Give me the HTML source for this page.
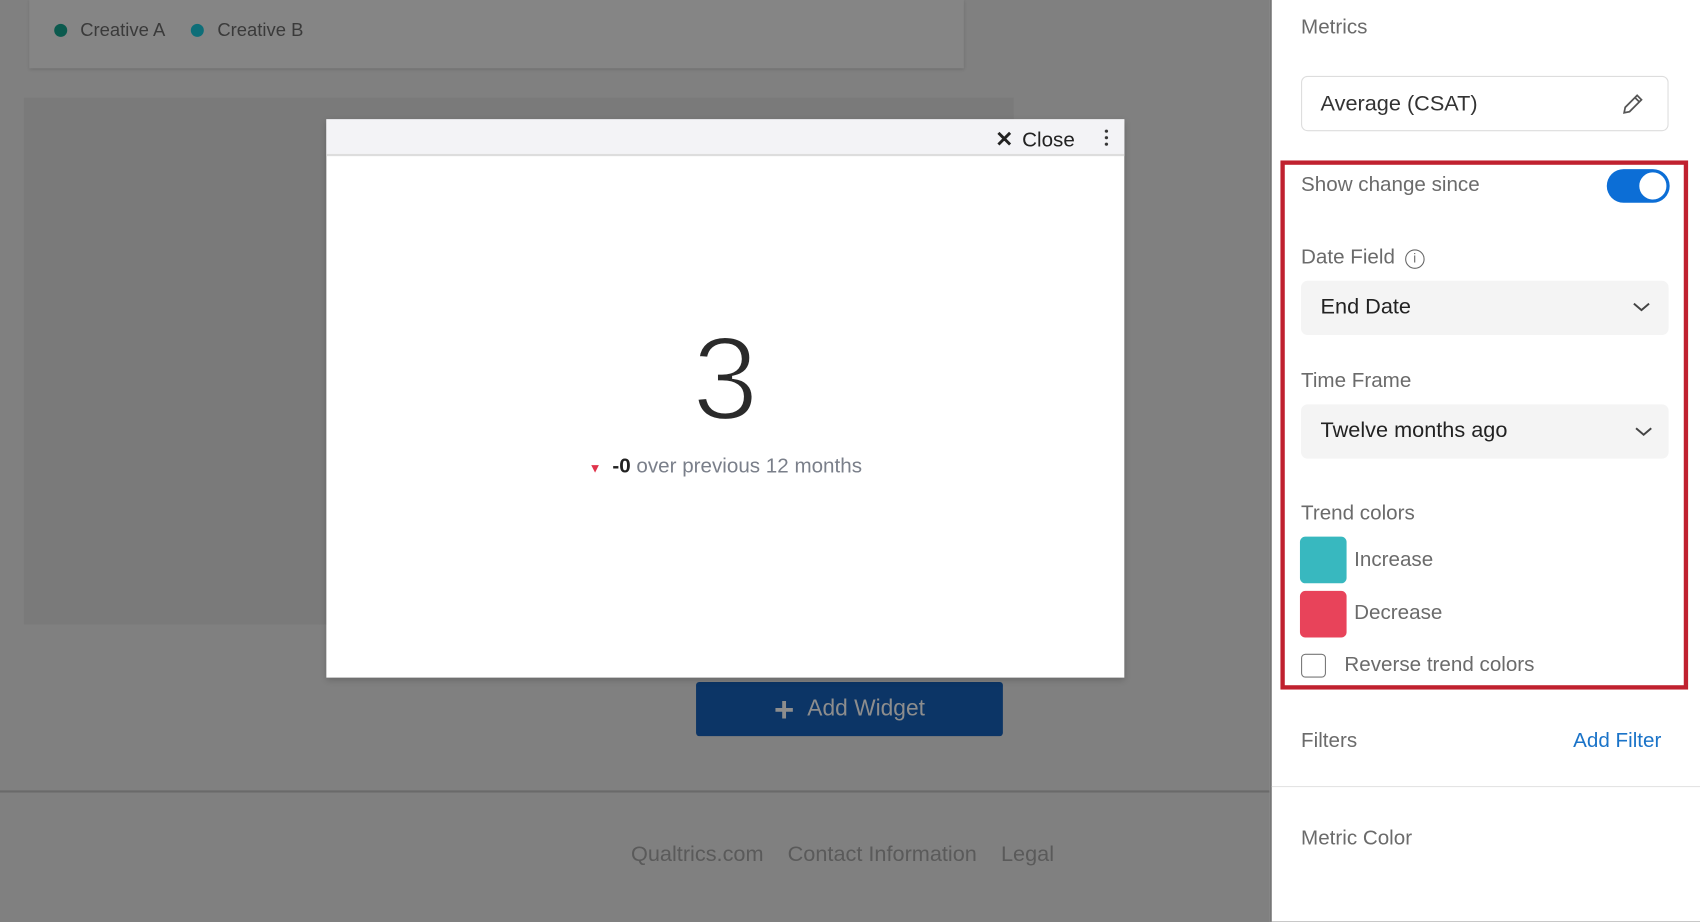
<!DOCTYPE html>
<html><head><style>
*{box-sizing:border-box;margin:0;padding:0}
body{width:1700px;height:850px;overflow:hidden;background:#808080;font-family:"Liberation Sans",sans-serif;position:relative}
#w{position:absolute;left:0;top:0;width:1568px;height:784px;transform:scale(1.0842);transform-origin:0 0}
.abs{position:absolute}
.lbl{color:#6b6b6b;font-size:19px}
</style></head><body><div id="w">
<div class="abs" style="left:27px;top:0;width:862px;height:63px;background:#858585;box-shadow:0 1px 3px rgba(0,0,0,.15)"></div>
<div class="abs" style="left:50px;top:18px;font-size:17px;color:#3a3a3a;display:flex;align-items:center">
<span style="width:12px;height:12px;border-radius:50%;background:#0b5a4e;display:inline-block;margin-right:12px"></span>Creative A
<span style="width:12px;height:12px;border-radius:50%;background:#0e6e78;display:inline-block;margin:0 12px 0 24px"></span>Creative B</div>
<div class="abs" style="left:22px;top:90px;width:913px;height:486px;background:#7a7a7a"></div>
<div class="abs" style="left:642px;top:629px;width:283px;height:50px;background:#0c3566;border-radius:3px;color:#8d8d8d;font-size:21px;display:flex;align-items:center;justify-content:center"><span style="font-size:32px;font-weight:bold;margin-right:12px;line-height:1">+</span>Add Widget</div>
<div class="abs" style="left:0;top:729px;width:1171px;height:2px;background:#6a6a6a"></div>
<div class="abs" style="left:582px;top:777px;font-size:20px;color:#5a5a5a">Qualtrics.com&nbsp;&nbsp;&nbsp;&nbsp;Contact Information&nbsp;&nbsp;&nbsp;&nbsp;Legal</div>
<div class="abs" style="left:301px;top:110px;width:736px;height:515px;background:#fff;box-shadow:0 2px 6px rgba(0,0,0,.2)">
<div style="height:34px;background:#f3f3f6;border-bottom:2px solid #ddd;position:relative">
<div class="abs" style="left:617px;top:6px;font-size:19px;color:#222"><b style="font-size:20px;margin-right:8px">✕</b>Close</div>
<div class="abs" style="left:718px;top:8px;width:3px;height:18px;background:radial-gradient(circle,#333 1.4px,transparent 1.6px) 0 0/3px 6px"></div>
</div>
<div class="abs" style="left:0;top:185px;width:736px;text-align:center;font-size:110px;color:#2a2a2a;line-height:1;-webkit-text-stroke:3px #fff;paint-order:normal">3</div>
<div class="abs" style="left:0;top:310px;width:736px;text-align:center;font-size:19px;color:#7a7f8a"><span style="color:#e0334b;font-size:12px;margin-right:10px">▼</span><b style="color:#222">-0</b> over previous 12 months</div>
</div>
<div class="abs" style="left:1171px;top:0;width:529px;height:850px;background:#fff;border-left:2px solid #777"></div>
<div class="abs lbl" style="left:1200px;top:15px">Metrics</div>
<div class="abs" style="left:1200px;top:70px;width:339px;height:51px;border:1px solid #ddd;border-radius:6px;font-size:20px;color:#333;padding:14px 0 0 17px">Average (CSAT)
<svg class="abs" style="right:20px;top:13px" width="24" height="24" viewBox="0 0 24 24" fill="none" stroke="#555" stroke-width="1.6"><path d="M4 20l1-5L16 4l4 4L9 19z M14 6l4 4"/></svg></div>
<div class="abs" style="left:1181px;top:148px;width:376px;height:488px;border:4px solid #c0212f"></div>
<div class="abs lbl" style="left:1200px;top:160px">Show change since</div>
<div class="abs" style="left:1482px;top:156px;width:58px;height:31px;border-radius:16px;background:#0c6ed6"><div class="abs" style="right:1px;top:1px;width:29px;height:29px;border-radius:50%;background:#fff;border:2px solid #0c6ed6"></div></div>
<div class="abs lbl" style="left:1200px;top:227px">Date Field <span style="display:inline-block;width:18px;height:18px;border:1.5px solid #666;border-radius:50%;font-size:12px;text-align:center;line-height:15px;vertical-align:1px;margin-left:4px">i</span></div>
<div class="abs" style="left:1200px;top:259px;width:339px;height:50px;background:#f4f4f4;border-radius:6px;font-size:20px;color:#222;padding:13px 0 0 18px">End Date</div>
<div class="abs lbl" style="left:1200px;top:341px">Time Frame</div>
<div class="abs" style="left:1200px;top:373px;width:339px;height:50px;background:#f4f4f4;border-radius:6px;font-size:20px;color:#222;padding:13px 0 0 18px">Twelve months ago</div>
<svg class="abs" style="left:1505px;top:277px" width="18" height="12" viewBox="0 0 18 12" fill="none" stroke="#444" stroke-width="1.8"><path d="M2 3l7 6 7-6"/></svg>
<svg class="abs" style="left:1507px;top:392px" width="18" height="12" viewBox="0 0 18 12" fill="none" stroke="#444" stroke-width="1.8"><path d="M2 3l7 6 7-6"/></svg>
<div class="abs lbl" style="left:1200px;top:463px">Trend colors</div>
<div class="abs" style="left:1199px;top:495px;width:43px;height:43px;background:#38b8bf;border-radius:5px"></div>
<div class="abs lbl" style="left:1249px;top:506px">Increase</div>
<div class="abs" style="left:1199px;top:545px;width:43px;height:43px;background:#e8435a;border-radius:5px"></div>
<div class="abs lbl" style="left:1249px;top:555px">Decrease</div>
<div class="abs" style="left:1200px;top:603px;width:23px;height:22px;border:1.5px solid #777;border-radius:4px"></div>
<div class="abs lbl" style="left:1240px;top:603px">Reverse trend colors</div>
<div class="abs lbl" style="left:1200px;top:673px">Filters</div>
<div class="abs" style="left:1451px;top:673px;font-size:19px;color:#1a73c8">Add Filter</div>
<div class="abs" style="left:1173px;top:725px;width:527px;height:1px;background:#e3e3e3"></div>
<div class="abs lbl" style="left:1200px;top:763px">Metric Color</div>
</div></body></html>
